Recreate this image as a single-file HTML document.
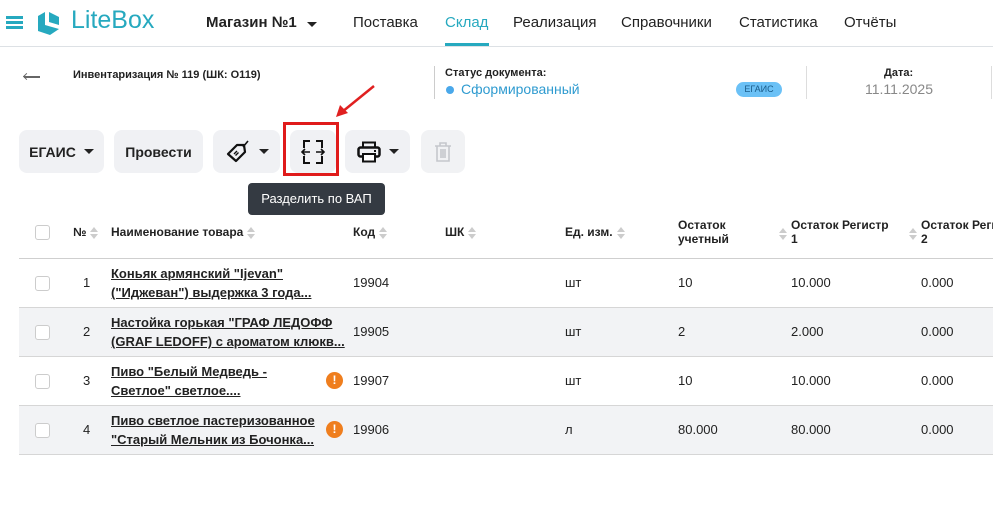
<!DOCTYPE html>
<html><head><meta charset="utf-8"><style>
*{box-sizing:border-box;margin:0;padding:0}
body{width:993px;height:516px;background:#fff;font-family:"Liberation Sans",sans-serif;color:#222;position:relative;overflow:hidden}
.a{position:absolute;white-space:nowrap}
.nav{font-size:15px;top:14px;color:#222}
.btn{position:absolute;top:130px;height:43px;background:#f0f1f4;border-radius:8px;font-size:14px;font-weight:bold;display:flex;align-items:center;justify-content:center}
.caret{display:inline-block;border-left:5px solid transparent;border-right:5px solid transparent;border-top:5px solid #222;margin-left:8px}
.th{font-size:12px;font-weight:bold;color:#222}
.sort{display:inline-block;width:9px;height:14px;vertical-align:middle;margin-left:4px;position:relative}
.sort:before{content:"";position:absolute;left:0;top:1px;border-left:4.5px solid transparent;border-right:4.5px solid transparent;border-bottom:5px solid #ccc}
.sort:after{content:"";position:absolute;left:0;top:8px;border-left:4.5px solid transparent;border-right:4.5px solid transparent;border-top:5px solid #ccc}
.row{position:absolute;left:19px;width:974px;height:49px;border-bottom:1px solid #d6d6d6}
.cb{position:absolute;left:16px;width:15px;height:15px;border:1.5px solid #ccc;border-radius:3px;background:#fff}
.td{position:absolute;font-size:13px;color:#222}
.nm{position:absolute;left:92px;font-size:13px;font-weight:bold;text-decoration:underline;line-height:19px;color:#222}
.warn{position:absolute;left:307px;width:17px;height:17px;border-radius:50%;background:#ef7e1e;color:#fff;font-size:12px;font-weight:bold;text-align:center;line-height:17px}
</style></head><body>
<div class="a" style="left:6px;top:16px;width:17px;height:3px;background:#26a9bf;box-shadow:0 5px 0 #26a9bf,0 10px 0 #26a9bf;top:16px"></div>
<svg class="a" style="left:34px;top:8px" width="30" height="30" viewBox="0 0 30 30"><path d="M4 8 L11 4 L11 17 L25 21 L16 27 L4 23 Z" fill="#26a9bf"/><path d="M15 4 L25 9 L25 17 L15 14 Z" fill="#26a9bf"/></svg>
<div class="a" style="left:71px;top:6px;font-size:25px;color:#26a9bf">LiteBox</div>
<div class="a nav" style="left:206px;font-weight:bold">Магазин №1 <span class="caret" style="margin-left:6px"></span></div>
<div class="a nav" style="left:353px">Поставка</div>
<div class="a nav" style="left:445px;color:#26a9bf">Склад</div>
<div class="a" style="left:445px;top:43px;width:44px;height:3px;background:#26a9bf"></div>
<div class="a nav" style="left:513px">Реализация</div>
<div class="a nav" style="left:621px">Справочники</div>
<div class="a nav" style="left:739px">Статистика</div>
<div class="a nav" style="left:844px">Отчёты</div>
<div class="a" style="left:0;top:46px;width:993px;height:1px;background:#dde1e5"></div>
<div class="a" style="left:24px;top:76px;width:16px;height:2px;background:#666"></div>
<div class="a" style="left:24px;top:74px;width:5px;height:5px;border-left:1.5px solid #666;border-bottom:1.5px solid #666;transform:rotate(45deg)"></div>
<div class="a" style="left:73px;top:69px;font-size:11px;font-weight:bold">Инвентаризация № 119 (ШК: О119)</div>
<div class="a" style="left:434px;top:66px;width:1px;height:33px;background:#ccc"></div>
<div class="a" style="left:445px;top:67px;font-size:11px;font-weight:bold">Статус документа:</div>
<div class="a" style="left:446px;top:86px;width:8px;height:8px;border-radius:50%;background:#4aa8ea"></div>
<div class="a" style="left:461px;top:81px;font-size:14px;color:#2f9bd0">Сформированный</div>
<div class="a" style="left:736px;top:82px;width:46px;height:15px;border-radius:8px;background:#6bc1f6;font-size:9px;color:#1a5c8a;text-align:center;line-height:15px">ЕГАИС</div>
<div class="a" style="left:806px;top:66px;width:1px;height:33px;background:#ddd"></div>
<div class="a" style="left:884px;top:67px;font-size:11px;font-weight:bold">Дата:</div>
<div class="a" style="left:865px;top:81px;font-size:14px;color:#888">11.11.2025</div>
<div class="a" style="left:991px;top:66px;width:1px;height:33px;background:#ddd"></div>
<svg class="a" style="left:330px;top:80px" width="50" height="42"><line x1="44" y1="6" x2="12" y2="32" stroke="#e02020" stroke-width="2.5"/><path d="M6 37 L10 25 L18 33 Z" fill="#e02020"/></svg>
<div class="btn" style="left:19px;width:85px">ЕГАИС<span class="caret"></span></div>
<div class="btn" style="left:114px;width:89px">Провести</div>
<div class="btn" style="left:213px;width:67px"><svg width="26" height="26" viewBox="0 0 26 26"><path d="M3 15 L12 6 L19 6 L20 13 L11 22 Z" fill="none" stroke="#111" stroke-width="2.2" stroke-linejoin="round"/><path d="M18 8 L23 2" stroke="#111" stroke-width="1.6"/><path d="M9 15 L12 12 M10.5 16.5 L13.5 13.5" stroke="#111" stroke-width="1.4"/></svg><span class="caret"></span></div>
<div class="btn" style="left:290px;width:46px"><svg width="28" height="28" viewBox="0 0 28 28" fill="none" stroke="#111" stroke-width="2"><path d="M11 3 H5 V10 M5 18 V25 H11 M17 3 H23 V10 M23 18 V25 H17"/><path d="M3 14 H11 M6 11 L3 14 L6 17 M17 14 H25 M22 11 L25 14 L22 17" stroke-width="1.6"/></svg></div>
<div class="a" style="left:283px;top:122px;width:56px;height:54px;border:3px solid #e01b1b"></div>
<div class="btn" style="left:345px;width:65px"><svg width="24" height="22" viewBox="0 0 24 22"><rect x="6" y="1.5" width="12" height="5" fill="none" stroke="#111" stroke-width="2"/><rect x="1.5" y="6.5" width="21" height="9" rx="2" fill="none" stroke="#111" stroke-width="2.5"/><rect x="6" y="13" width="12" height="7.5" fill="#fff" stroke="#111" stroke-width="2"/><rect x="17" y="9" width="2" height="2" fill="#111"/></svg><span class="caret"></span></div>
<div class="btn" style="left:421px;width:44px;background:#f1f2f4"><svg width="20" height="22" viewBox="0 0 20 22" fill="none" stroke="#c5c7cc" stroke-width="1.6"><path d="M2 5 H18 M7 5 V2 H13 V5 M4 5 V20 H16 V5 M8 8 V17 M10 8 V17 M12 8 V17"/></svg></div>
<div class="a" style="left:248px;top:183px;width:137px;height:32px;background:#343a42;border-radius:4px;color:#fff;font-size:13px;line-height:32px;text-align:center">Разделить по ВАП</div>
<div class="a" style="left:35px;top:225px;width:15px;height:15px;border:1.5px solid #ccc;border-radius:3px"></div>
<div class="a th" style="left:73px;top:225px">№<span class="sort"></span></div>
<div class="a th" style="left:111px;top:225px">Наименование товара<span class="sort"></span></div>
<div class="a th" style="left:353px;top:225px">Код<span class="sort"></span></div>
<div class="a th" style="left:445px;top:225px">ШК<span class="sort"></span></div>
<div class="a th" style="left:565px;top:225px">Ед. изм.<span class="sort"></span></div>
<div class="a th" style="left:678px;top:218px;line-height:14px">Остаток<br>учетный</div>
<div class="a" style="left:775px;top:225px"><span class="sort"></span></div>
<div class="a th" style="left:791px;top:218px;line-height:14px">Остаток Регистр<br>1</div>
<div class="a" style="left:905px;top:225px"><span class="sort"></span></div>
<div class="a th" style="left:921px;top:218px;line-height:14px">Остаток Регистр<br>2</div>
<div class="a" style="left:19px;top:258px;width:974px;height:1px;background:#cfcfcf"></div>
<div class="row" style="top:259px;background:#fff">
<div class="cb" style="top:17px"></div><div class="td" style="left:64px;top:16px">1</div>
<div class="nm" style="top:5px">Коньяк армянский "Ijevan"<br>("Иджеван") выдержка 3 года...</div>
<div class="td" style="left:334px;top:16px">19904</div><div class="td" style="left:546px;top:16px">шт</div><div class="td" style="left:659px;top:16px">10</div><div class="td" style="left:772px;top:16px">10.000</div><div class="td" style="left:902px;top:16px">0.000</div></div>
<div class="row" style="top:308px;background:#f2f3f5">
<div class="cb" style="top:17px"></div><div class="td" style="left:64px;top:16px">2</div>
<div class="nm" style="top:5px">Настойка горькая "ГРАФ ЛЕДОФФ<br>(GRAF LEDOFF) с ароматом клюкв...</div>
<div class="td" style="left:334px;top:16px">19905</div><div class="td" style="left:546px;top:16px">шт</div><div class="td" style="left:659px;top:16px">2</div><div class="td" style="left:772px;top:16px">2.000</div><div class="td" style="left:902px;top:16px">0.000</div></div>
<div class="row" style="top:357px;background:#fff">
<div class="cb" style="top:17px"></div><div class="td" style="left:64px;top:16px">3</div>
<div class="nm" style="top:5px">Пиво "Белый Медведь -<br>Светлое" светлое....</div><div class="warn" style="top:15px">!</div>
<div class="td" style="left:334px;top:16px">19907</div><div class="td" style="left:546px;top:16px">шт</div><div class="td" style="left:659px;top:16px">10</div><div class="td" style="left:772px;top:16px">10.000</div><div class="td" style="left:902px;top:16px">0.000</div></div>
<div class="row" style="top:406px;background:#f2f3f5">
<div class="cb" style="top:17px"></div><div class="td" style="left:64px;top:16px">4</div>
<div class="nm" style="top:5px">Пиво светлое пастеризованное<br>"Старый Мельник из Бочонка...</div><div class="warn" style="top:15px">!</div>
<div class="td" style="left:334px;top:16px">19906</div><div class="td" style="left:546px;top:16px">л</div><div class="td" style="left:659px;top:16px">80.000</div><div class="td" style="left:772px;top:16px">80.000</div><div class="td" style="left:902px;top:16px">0.000</div></div>
</body></html>
